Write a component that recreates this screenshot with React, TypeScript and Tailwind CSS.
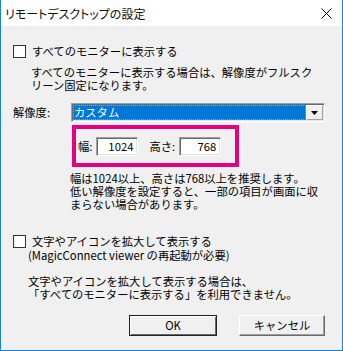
const sunken =
  "border-t border-l border-t-[#a0a0a0] border-l-[#a0a0a0] border-b border-r border-b-white border-r-white shadow-[inset_1px_1px_0_#696969,inset_-1px_-1px_0_#e3e3e3]";

function Check({ label }: { label: string }) {
  return (
    <label className="flex items-center gap-[6px] h-[13px]">
      <span className="w-[13px] h-[13px] bg-white border border-[#333] shrink-0" />
      <span>{label}</span>
    </label>
  );
}

export default function App() {
  return (
    <div className="w-[343px] h-[351px] bg-[#f0f0f0] border-x border-b border-[#1883d7] flex flex-col text-[11.3px] leading-[13px] text-black whitespace-nowrap overflow-hidden font-['Noto_Sans_CJK_JP','Liberation_Sans',sans-serif]">
      {/* タイトルバー */}
      <div className="h-[26px] bg-white flex items-center justify-between pl-[4px] pr-[10px] shrink-0">
        <span className="text-[12px] text-[#111] [font-feature-settings:'palt']">リモートデスクトップの設定</span>
        <svg width="11" height="11" viewBox="0 0 11 11">
          <path d="M0.5 0.5 L10.5 10.5 M10.5 0.5 L0.5 10.5" stroke="#000" strokeWidth="1" />
        </svg>
      </div>

      <div className="flex flex-col pl-[12px] pr-[17px]">
        <div className="mt-[19px]">
          <Check label="すべてのモニターに表示する" />
        </div>
        <p className="ml-[18px] mt-[8px]">
          すべてのモニターに表示する場合は、解像度がフルスク
          <br />
          リーン固定になります。
        </p>

        <div className="flex items-center mt-[11px] h-[19px]">
          <span className="w-[58px]">解像度:</span>
          <div className={`flex-1 h-[19px] bg-white flex items-center p-[1px] ${sunken}`}>
            <div className="flex-1 h-full bg-[#0078d7] outline-1 outline-dotted outline-[#d89a3a] -outline-offset-1 text-white flex items-center pl-[1px]">
              カスタム
            </div>
            <div className="w-[17px] h-full bg-[#f0f0f0] border-t border-l border-t-white border-l-white border-b border-r border-b-[#a0a0a0] border-r-[#a0a0a0] flex items-center justify-center">
              <svg width="7" height="4" viewBox="0 0 7 4">
                <path d="M0 0 H7 L3.5 4 Z" fill="#000" />
              </svg>
            </div>
          </div>
        </div>

        <div className="ml-[59px] mt-[3px] w-[167px] h-[42px] border-[4px] border-[#e5007f] flex items-center pl-[2px]">
          <span>幅:</span>
          <div className={`w-[42px] h-[19px] bg-white flex items-center justify-end pr-[4px] ml-[4px] ${sunken}`}>
            1024
          </div>
          <span className="ml-[11px]">高さ:</span>
          <div className={`w-[42px] h-[19px] bg-white flex items-center justify-end pr-[4px] ml-[4px] ${sunken}`}>
            768
          </div>
        </div>

        <p className="ml-[57px] mt-[5px]">
          幅は1024以上、高さは768以上を推奨します。
          <br />
          低い解像度を設定すると、一部の項目が画面に収
          <br />
          まらない場合があります。
        </p>

        <div className="mt-[24px]">
          <Check label="文字やアイコンを拡大して表示する" />
        </div>
        <p className="ml-[15px] mt-[1px]">(MagicConnect viewer の再起動が必要)</p>

        <p className="ml-[15px] mt-[13px]">
          文字やアイコンを拡大して表示する場合は、
          <br />
          「すべてのモニターに表示する」を利用できません。
        </p>

        <div className="flex justify-end gap-[22px] mt-[14px]">
          <button className="w-[88px] h-[21px] bg-[#f0f0f0] border border-[#222] shadow-[inset_1px_1px_0_#fff,inset_-1px_-1px_0_#696969] flex items-center justify-center">
            OK
          </button>
          <button className="w-[86px] h-[21px] bg-[#f0f0f0] border-t border-l border-t-white border-l-white border-b border-r border-b-[#696969] border-r-[#696969] shadow-[inset_-1px_-1px_0_#a0a0a0] flex items-center justify-center">
            キャンセル
          </button>
        </div>
      </div>
    </div>
  );
}
